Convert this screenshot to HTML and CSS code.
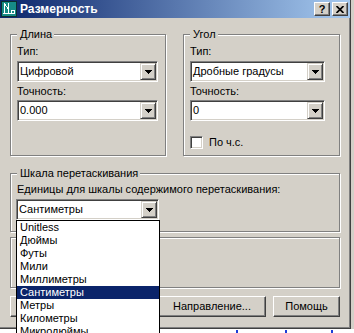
FILE: index.html
```html
<!DOCTYPE html>
<html lang="ru">
<head>
<meta charset="utf-8">
<title>Размерность</title>
<link rel="stylesheet" href="styles.css">
</head>
<body>
<div class="window">
  <div class="titlebar">
    <svg class="app-icon" width="16" height="16" viewBox="0 0 16 16" shape-rendering="crispEdges">
      <rect x="0.5" y="0.5" width="15" height="15" fill="#168a86" stroke="#0b2f2e"/>
      <path d="M3.5 2v10M4 3l3 5M7.5 2v10M2 12.5h12M10.5 9.5h3v3h-3z" stroke="#fff" fill="none"/>
    </svg>
    <span class="title">Размерность</span>
    <div class="caption-buttons">
      <span class="cap-btn cap-help">?</span>
      <span class="cap-btn">
        <svg width="8" height="7" viewBox="0 0 8 7"><path d="M0.5 0L7.5 7M7.5 0L0.5 7" stroke="#000" stroke-width="1.7"/></svg>
      </span>
    </div>
  </div>

  <div class="content">
    <div class="group-row">
      <fieldset class="group group-length">
        <legend>Длина</legend>
        <div class="field-label">Тип:</div>
        <div class="combo combo-left"><span class="combo-text">Цифровой</span><span class="drop-btn"><svg class="tri" width="7" height="4" viewBox="0 0 7 4" shape-rendering="crispEdges"><path d="M0 0h7v1H0zM1 1h5v1H1zM2 2h3v1H2zM3 3h1v1H3z"/></svg></span></div>
        <div class="field-label field-label-next">Точность:</div>
        <div class="combo combo-left combo-next"><span class="combo-text">0.000</span><span class="drop-btn"><svg class="tri" width="7" height="4" viewBox="0 0 7 4" shape-rendering="crispEdges"><path d="M0 0h7v1H0zM1 1h5v1H1zM2 2h3v1H2zM3 3h1v1H3z"/></svg></span></div>
      </fieldset>

      <fieldset class="group group-angle">
        <legend>Угол</legend>
        <div class="field-label">Тип:</div>
        <div class="combo combo-right"><span class="combo-text">Дробные градусы</span><span class="drop-btn"><svg class="tri" width="7" height="4" viewBox="0 0 7 4" shape-rendering="crispEdges"><path d="M0 0h7v1H0zM1 1h5v1H1zM2 2h3v1H2zM3 3h1v1H3z"/></svg></span></div>
        <div class="field-label field-label-next">Точность:</div>
        <div class="combo combo-right combo-next"><span class="combo-text">0</span><span class="drop-btn"><svg class="tri" width="7" height="4" viewBox="0 0 7 4" shape-rendering="crispEdges"><path d="M0 0h7v1H0zM1 1h5v1H1zM2 2h3v1H2zM3 3h1v1H3z"/></svg></span></div>
        <div class="check"><span class="check-box"></span><span>По ч.с.</span></div>
      </fieldset>
    </div>

    <fieldset class="group group-scale">
      <legend>Шкала перетаскивания</legend>
      <div class="field-label">Единицы для шкалы содержимого перетаскивания:</div>
      <div class="combo combo-scale">
        <span class="combo-text">Сантиметры</span>
        <span class="drop-btn"><svg class="tri" width="7" height="4" viewBox="0 0 7 4" shape-rendering="crispEdges"><path d="M0 0h7v1H0zM1 1h5v1H1zM2 2h3v1H2zM3 3h1v1H3z"/></svg></span>
        <ul class="dropdown">
          <li>Unitless</li>
          <li>Дюймы</li>
          <li>Футы</li>
          <li>Мили</li>
          <li>Миллиметры</li>
          <li class="selected">Сантиметры</li>
          <li>Метры</li>
          <li>Километры</li>
          <li>Микродюймы</li>
        </ul>
      </div>
    </fieldset>

    <fieldset class="group group-empty"></fieldset>

    <div class="buttons">
      <button class="btn btn-ok">OK</button>
      <button class="btn btn-cancel">Отмена</button>
      <button class="btn btn-dir">Направление...</button>
      <button class="btn btn-help">Помощь</button>
    </div>
  </div>
</div>
</body>
</html>
```

FILE: styles.css
```css
* {
  box-sizing: border-box;
}

html,
body {
  margin: 0;
  height: 100%;
  overflow: hidden;
}

body {
  font: 11px/13px "Liberation Sans", Arial, sans-serif;
  color: #000;
  background:
    linear-gradient(#1c3cd8, #1c3cd8) 236px 330px / 2px 3px no-repeat,
    linear-gradient(#1c3cd8, #1c3cd8) 285px 330px / 2px 3px no-repeat,
    linear-gradient(#1c3cd8, #1c3cd8) 331px 330px / 2px 3px no-repeat,
    linear-gradient(to bottom, #d4d0c8 329px, #ffffff 329px) 0 0 / 100% 100% no-repeat;
}

.window {
  position: relative;
  width: 351px;
  height: 329px;
  background: #d4d0c8;
  border-right: 1px solid #404040;
  border-bottom: 1px solid #404040;
  box-shadow: inset -1px -1px 0 #808080;
}

/* Title bar */
.titlebar {
  display: flex;
  align-items: center;
  height: 18px;
  padding: 0 2px 0 1px;
  background: linear-gradient(to right, #0a246a, #a6caf0);
}

.app-icon {
  flex: none;
  display: block;
}

.title {
  flex: 1;
  margin-left: 3px;
  color: #fff;
  font-weight: bold;
  font-size: 12px;
  line-height: 18px;
  white-space: nowrap;
}

.caption-buttons {
  display: flex;
  gap: 2px;
}

.cap-btn {
  width: 16px;
  height: 14px;
  display: flex;
  align-items: center;
  justify-content: center;
  background: #d4d0c8;
  border: 1px solid;
  border-color: #fff #404040 #404040 #fff;
  box-shadow: inset -1px -1px 0 #808080;
}

.cap-help {
  font-weight: bold;
  font-size: 11px;
  line-height: 12px;
  padding-bottom: 1px;
}

.cap-btn svg {
  display: block;
}

/* Content */
.content {
  padding: 10px 10px 0 10px;
}

.group-row {
  display: flex;
  gap: 17px;
}

.group {
  margin: 0;
  min-width: 0;
  padding: 4px 6px 6px 6px;
  border: 1px solid #808080;
  box-shadow: inset 1px 1px 0 #fff, 1px 1px 0 #fff;
}

.group legend {
  padding: 0 2px 0 3px;
  background: #d4d0c8;
  line-height: 13px;
  white-space: nowrap;
}

.group-length {
  width: 156px;
}

.group-angle {
  width: 157px;
}

.field-label {
  height: 13px;
  white-space: nowrap;
}

.field-label-next {
  margin-top: 3px;
}

/* Combo box */
.combo {
  position: relative;
  display: flex;
  height: 21px;
  margin-top: 3px;
  padding: 1px;
  background: #fff;
  border: 1px solid;
  border-color: #808080 #fff #fff #808080;
  box-shadow: inset 1px 1px 0 #404040, inset -1px -1px 0 #d4d0c8;
}

.combo-next {
  margin-top: 2px;
}

.combo-left {
  width: 141px;
}

.combo-right {
  width: 135px;
}

.combo-text {
  flex: 1;
  padding-left: 1px;
  line-height: 17px;
  white-space: nowrap;
  overflow: hidden;
}

.drop-btn {
  flex: none;
  width: 16px;
  height: 17px;
  display: flex;
  align-items: center;
  justify-content: center;
  background: #d4d0c8;
  border: 1px solid;
  border-color: #d4d0c8 #404040 #404040 #d4d0c8;
  box-shadow: inset 1px 1px 0 #fff, inset -1px -1px 0 #808080;
}

.tri {
  display: block;
  fill: #000;
}

/* Checkbox */
.check {
  display: flex;
  align-items: center;
  gap: 6px;
  height: 13px;
  margin-top: 15px;
}

.check-box {
  width: 13px;
  height: 13px;
  background: #fff;
  border: 1px solid;
  border-color: #808080 #fff #fff #808080;
  box-shadow: inset 1px 1px 0 #404040, inset -1px -1px 0 #d4d0c8;
}

/* Scale group */
.group-scale {
  margin-top: 11px;
  padding: 3px 6px 11px 6px;
}

.combo-scale {
  width: 143px;
  margin-left: -1px;
}

.dropdown {
  position: absolute;
  z-index: 10;
  top: calc(100% + 1px);
  left: -1px;
  width: 144px;
  margin: 0;
  padding: 0;
  list-style: none;
  background: #fff;
  border: 1px solid #000;
}

.dropdown li {
  height: 13px;
  line-height: 13px;
  padding-left: 3px;
  white-space: nowrap;
}

.dropdown li.selected {
  background: #0a246a;
  color: #fff;
}

.group-empty {
  height: 51px;
  margin-top: 5px;
  padding: 0;
}

/* Buttons */
.buttons {
  display: flex;
  gap: 7px;
  margin-top: 8px;
}

.btn {
  height: 21px;
  padding: 0;
  font: 11px/13px "Liberation Sans", Arial, sans-serif;
  color: #000;
  background: #d4d0c8;
  border: 1px solid;
  border-color: #fff #404040 #404040 #fff;
  box-shadow: inset -1px -1px 0 #808080;
}

.btn-ok,
.btn-cancel,
.btn-help {
  width: 67px;
}

.btn-dir {
  width: 108px;
}
```
